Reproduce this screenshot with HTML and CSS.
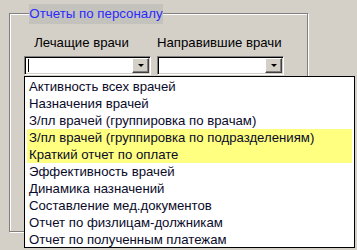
FILE: index.html
```html
<!DOCTYPE html>
<html lang="ru">
<head>
    <meta charset="UTF-8">
    <title>Отчеты по персоналу</title>
    <link rel="stylesheet" href="styles.css">
</head>
<body>
    <div class="group">
        <div class="legend">Отчеты по персоналу</div>
        <div class="fields">
            <div class="field">
                <div class="label">Лечащие врачи</div>
                <div class="combo">
                    <div class="combo-text"><span class="caret"></span></div>
                    <div class="combo-btn"><span class="arrow"></span></div>
                </div>
            </div>
            <div class="field">
                <div class="label">Направившие врачи</div>
                <div class="combo">
                    <div class="combo-text"></div>
                    <div class="combo-btn"><span class="arrow"></span></div>
                </div>
            </div>
        </div>
    </div>

    <ul class="dropdown">
        <li>Активность всех врачей</li>
        <li>Назначения врачей</li>
        <li>З/пл врачей (группировка по врачам)</li>
        <li class="hl">З/пл врачей (группировка по подразделениям)</li>
        <li class="hl">Краткий отчет по оплате</li>
        <li>Эффективность врачей</li>
        <li>Динамика назначений</li>
        <li>Составление мед.документов</li>
        <li>Отчет по физлицам-должникам</li>
        <li>Отчет по полученным платежам</li>
    </ul>
</body>
</html>
```

FILE: styles.css
```css
*,*::after,*::before{
    box-sizing: border-box;
}
body{
    margin: 0;
    height: 250px;
    overflow: hidden;
    background-color: #d4d0c8;
    font-family: "Liberation Sans", Arial, sans-serif;
    font-size: 13px;
    position: relative;
}
.group{
    position: relative;
    margin: 13px 0 0 9px;
    width: 299px;
    height: 219px;
    border: 1px solid #808080;
    box-shadow: 1px 1px 0 #fff, inset 1px 1px 0 #fff;
    padding: 21px 0 0 14px;
}
.legend{
    position: absolute;
    top: -10px;
    left: 19px;
    width: 134px;
    height: 20px;
    padding-top: 2px;
    text-align: center;
    background-color: #c4c2bd;
    color: #2a2aff;
    font-size: 13.3px;
    line-height: 16px;
    white-space: nowrap;
}
.fields{
    display: grid;
    grid-template-columns: 127px 127px;
    column-gap: 6px;
}
.label{
    text-align: center;
    padding-right: 12px;
    color: #000;
    height: 21px;
    line-height: 16px;
    white-space: nowrap;
    font-size: 13.2px;
}
.combo{
    display: flex;
    height: 19px;
    background-color: #fff;
    border-top: 1px solid #808080;
    border-left: 1px solid #808080;
    border-right: 1px solid #fff;
    border-bottom: 1px solid #fff;
    box-shadow: inset 1px 1px 0 #000, inset -1px -1px 0 #d4d0c8;
    padding: 1px;
}
.combo-text{
    flex: 1;
    padding: 1px 2px;
}
.caret{
    display: block;
    width: 1px;
    height: 13px;
    background-color: #000;
}
.combo-btn{
    width: 17px;
    height: 15px;
    background-color: #d4d0c8;
    border-top: 1px solid #fff;
    border-left: 1px solid #fff;
    border-right: 1px solid #404040;
    border-bottom: 1px solid #404040;
    box-shadow: inset -1px -1px 0 #808080;
    display: flex;
    justify-content: center;
    align-items: center;
}
.arrow{
    width: 0;
    height: 0;
    border-left: 3px solid transparent;
    border-right: 3px solid transparent;
    border-top: 3px solid #000;
    margin-left: 1px;
}
.dropdown{
    position: absolute;
    top: 76px;
    left: 24px;
    width: 331px;
    height: 172px;
    margin: 0;
    padding: 1px 2px;
    list-style: none;
    background-color: #fff;
    border: 1px solid #000;
    font-size: 13.2px;
}
.dropdown li{
    height: 17px;
    line-height: 17px;
    padding-left: 2px;
    color: #0a0a2a;
    white-space: nowrap;
}
.dropdown li.hl{
    background-color: #ffff80;
}
```
